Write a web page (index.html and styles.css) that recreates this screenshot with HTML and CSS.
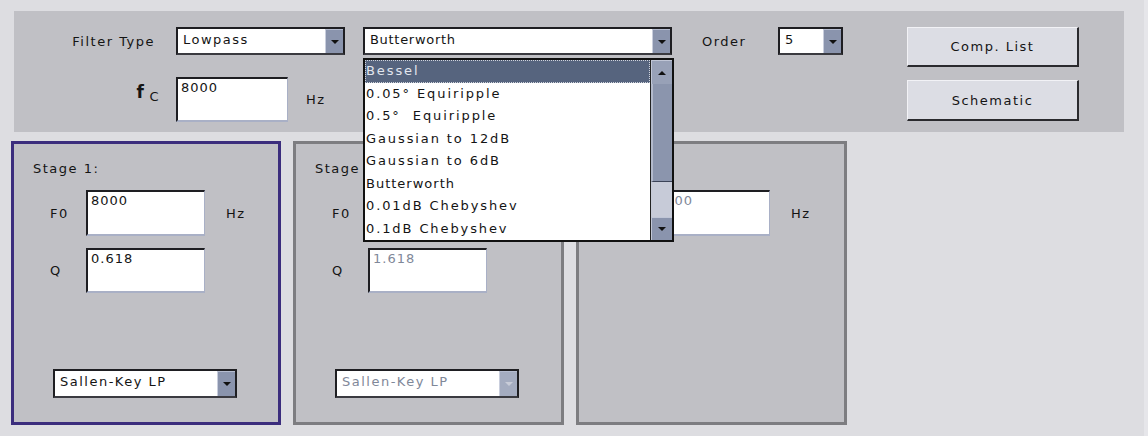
FILE: index.html
```html
<!DOCTYPE html>
<html lang="en">
<head>
    <meta charset="UTF-8">
    <title>Filter Design</title>
    <link rel="stylesheet" href="styles.css">
</head>
<body>
    <div class="app">
        <div class="top-panel">
            <div class="fields">
                <div class="row row-type">
                    <span class="label label-type">Filter Type</span>
                    <div class="select select-type"><span class="value">Lowpass</span><span class="arrow"></span></div>
                    <div class="combo">
                        <div class="select select-family"><span class="value value-tight">Butterworth</span><span class="arrow"></span></div>
                        <div class="list">
                            <div class="options">
                                <div class="option selected">Bessel</div>
                                <div class="option">0.05° Equiripple</div>
                                <div class="option">0.5°&nbsp; Equiripple</div>
                                <div class="option">Gaussian to 12dB</div>
                                <div class="option">Gaussian to 6dB</div>
                                <div class="option value-tight">Butterworth</div>
                                <div class="option">0.01dB Chebyshev</div>
                                <div class="option">0.1dB Chebyshev</div>
                            </div>
                            <div class="scrollbar">
                                <div class="scroll-btn up"><span class="tri tri-up"></span></div>
                                <div class="thumb"></div>
                                <div class="track"></div>
                                <div class="scroll-btn"><span class="tri"></span></div>
                            </div>
                        </div>
                    </div>
                    <span class="label label-order">Order</span>
                    <div class="select select-order"><span class="value">5</span><span class="arrow"></span></div>
                </div>
                <div class="row row-fc">
                    <span class="label label-fc"><b>f</b><span class="sub">C</span></span>
                    <div class="input input-fc">8000</div>
                    <span class="label unit-fc">Hz</span>
                </div>
            </div>
            <div class="buttons">
                <button class="btn btn-list">Comp. List</button>
                <button class="btn btn-schematic">Schematic</button>
            </div>
        </div>

        <div class="stages">
            <div class="stage active">
                <div class="stage-title">Stage 1:</div>
                <div class="param">
                    <span class="label param-label">F0</span>
                    <div class="input">8000</div>
                    <span class="label unit">Hz</span>
                </div>
                <div class="param param-q">
                    <span class="label param-label">Q</span>
                    <div class="input">0.618</div>
                </div>
                <div class="select select-topology"><span class="value">Sallen-Key LP</span><span class="arrow"></span></div>
            </div>

            <div class="stage">
                <div class="stage-title">Stage 2:</div>
                <div class="param">
                    <span class="label param-label">F0</span>
                    <div class="input disabled">8000</div>
                    <span class="label unit">Hz</span>
                </div>
                <div class="param param-q">
                    <span class="label param-label">Q</span>
                    <div class="input disabled">1.618</div>
                </div>
                <div class="select select-topology disabled"><span class="value">Sallen-Key LP</span><span class="arrow"></span></div>
            </div>

            <div class="stage">
                <div class="stage-title">Stage 3:</div>
                <div class="param">
                    <span class="label param-label">F0</span>
                    <div class="input disabled">8000</div>
                    <span class="label unit">Hz</span>
                </div>
            </div>
        </div>
    </div>
</body>
</html>
```

FILE: styles.css
```css
:root {
    --page-bg: #dddde1;
    --panel-bg: #c0c0c5;
    --text-color: #141414;
    --field-dark: #1e1e22;
    --field-light: #a9b0c6;
    --arrow-bg: #8a94ad;
    --stage-border: #7d7d81;
    --active-border: #3b2d7d;
    --disabled-text: #7f8899;
}

body {
    margin: 0;
    background-color: var(--page-bg);
    font-family: 'DejaVu Sans', sans-serif;
    font-size: 13px;
    letter-spacing: 1.5px;
    color: var(--text-color);
}

.app {
    width: 1148px;
    height: 436px;
    padding-top: 11px;
    box-sizing: border-box;
    border-right: 4px solid #e6e6ea;
}

/* top panel */

.top-panel {
    display: flex;
    margin-left: 14px;
    width: 1110px;
    height: 121px;
    padding-top: 16px;
    box-sizing: border-box;
    background-color: var(--panel-bg);
}

.fields {
    width: 893px;
}

.row {
    display: flex;
    align-items: center;
}

.row-type {
    height: 28px;
}

.label {
    white-space: nowrap;
}

.label-type {
    width: 141px;
    margin-right: 21px;
    text-align: right;
}

.label-order {
    width: 76px;
    padding-left: 30px;
}

.row-fc {
    margin-top: 22px;
    height: 45px;
}

.label-fc {
    width: 146px;
    margin-right: 16px;
    text-align: right;
    align-self: flex-start;
    padding-top: 5px;
}

.label-fc b {
    font-size: 17px;
}

.label-fc .sub {
    font-size: 13px;
    margin-left: 4px;
    position: relative;
    top: 3px;
}

.unit-fc {
    margin-left: 18px;
}

/* controls */

.select {
    display: flex;
    height: 28px;
    box-sizing: border-box;
    background-color: white;
    border-top: 2px solid var(--field-dark);
    border-left: 2px solid var(--field-dark);
    border-right: 2px solid var(--field-dark);
    border-bottom: 2px solid #3a3a40;
}

.select .value {
    flex: 1;
    padding: 3px 0 0 5px;
    line-height: 16px;
    overflow: hidden;
    white-space: nowrap;
}

.value-tight {
    letter-spacing: 0.7px;
}

.select .arrow {
    width: 17px;
    background-color: var(--arrow-bg);
    border-left: 1px solid #c9cedd;
    border-top: 1px solid #b5bccf;
    position: relative;
}

.select .arrow::after {
    content: '';
    position: absolute;
    left: 5px;
    top: 10px;
    border-left: 4px solid transparent;
    border-right: 4px solid transparent;
    border-top: 4px solid #111;
}

.select-type {
    width: 169px;
}

.combo {
    position: relative;
    margin-left: 18px;
}

.select-family {
    width: 309px;
}

.select-order {
    width: 65px;
}

.input {
    width: 119px;
    height: 46px;
    box-sizing: border-box;
    background-color: white;
    border-top: 2px solid var(--field-dark);
    border-left: 2px solid var(--field-dark);
    border-right: 1px solid var(--field-light);
    border-bottom: 2px solid var(--field-light);
    padding: 1px 0 0 3px;
    line-height: 16px;
    letter-spacing: 1px;
}

.input-fc {
    width: 112px;
    height: 45px;
}

.input.disabled,
.select.disabled .value {
    color: var(--disabled-text);
}

.select.disabled .arrow {
    background-color: #a4acc0;
}

.select.disabled .arrow::after {
    border-top-color: #c8ccd8;
}

/* dropdown list of the family combo */

.list {
    position: absolute;
    top: calc(100% + 3px);
    left: 0;
    width: 311px;
    height: 184px;
    box-sizing: border-box;
    display: flex;
    background-color: white;
    border: 2px solid #111;
    z-index: 10;
}

.options {
    flex: 1;
}

.option {
    height: 22.5px;
    line-height: 22px;
    padding-left: 1px;
    font-size: 13px;
    letter-spacing: 1.9px;
    white-space: nowrap;
}

.option.value-tight {
    letter-spacing: 1px;
}

.option.selected {
    background-color: #56647e;
    color: #e2e6ee;
    outline: 1px dotted #d0d4dc;
    outline-offset: -1px;
}

.scrollbar {
    width: 21px;
    display: flex;
    flex-direction: column;
    border-left: 1px solid #222;
}

.scroll-btn {
    height: 22px;
    background-color: var(--arrow-bg);
    border-top: 1px solid #c0c6d6;
    border-left: 1px solid #c0c6d6;
    display: flex;
    align-items: center;
    justify-content: center;
}

.scroll-btn.up {
    height: 23px;
    background-color: #98a1b7;
}

.tri {
    border-left: 4px solid transparent;
    border-right: 4px solid transparent;
    border-top: 4px solid #111;
}

.tri-up {
    border-top: none;
    border-bottom: 4px solid #111;
}

.thumb {
    height: 98px;
    background-color: #8b95ad;
    border-left: 2px solid #b3bacc;
    border-bottom: 1px solid #3c4458;
    box-sizing: border-box;
}

.track {
    flex: 1;
    background-color: #c7cbd8;
}

/* buttons */

.buttons {
    display: flex;
    flex-direction: column;
    gap: 13px;
}

.btn {
    width: 172px;
    height: 40px;
    background-color: #dcdde4;
    border-top: 1px solid #f2f2f6;
    border-left: 1px solid #f2f2f6;
    border-right: 2px solid #2a2a2e;
    border-bottom: 2px solid #2a2a2e;
    font-family: 'DejaVu Sans', sans-serif;
    font-size: 13px;
    letter-spacing: 1.5px;
    color: var(--text-color);
    padding: 0;
}

.btn-schematic {
    height: 41px;
}

/* stages */

.stages {
    display: flex;
    gap: 12px;
    margin-top: 9px;
    margin-left: 11px;
}

.stage {
    width: 270px;
    height: 284px;
    box-sizing: border-box;
    border: 3px solid var(--stage-border);
    background-color: var(--panel-bg);
    padding: 17px 0 0 19px;
}

.stage + .stage {
    width: 271px;
}

.stage.active {
    border-color: var(--active-border);
}

.stage-title {
    line-height: 16px;
}

.param {
    display: flex;
    align-items: center;
    margin-top: 13px;
    padding-left: 17px;
}

.param-q {
    margin-top: 12px;
}

.param-q .input {
    height: 45px;
}

.param-label {
    width: 36px;
}

.unit {
    margin-left: 21px;
}

.select-topology {
    width: 184px;
    height: 29px;
    margin-top: 76px;
    margin-left: 20px;
}
```
